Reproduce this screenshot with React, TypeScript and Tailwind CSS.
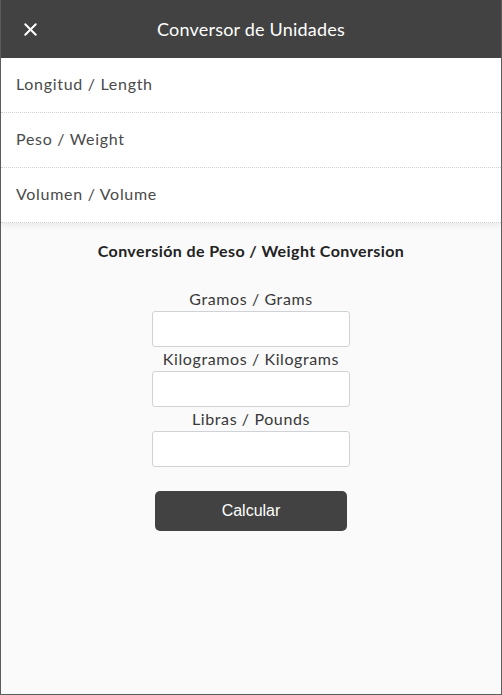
import { X } from 'lucide-react';

const CATEGORIES = ['Longitud / Length', 'Peso / Weight', 'Volumen / Volume'];

const FIELDS = ['Gramos / Grams', 'Kilogramos / Kilograms', 'Libras / Pounds'];

export default function App() {
  return (
    <div
      className="w-[502px] h-[695px] flex flex-col bg-[#fafafa] border-x border-b border-[#5c5c5c] overflow-hidden"
      style={{ fontFamily: 'Lato, "Open Sans", sans-serif' }}
    >
      <header className="h-[58px] shrink-0 bg-[#424242] flex items-center relative">
        <button className="absolute left-[19px] top-[19px] text-white">
          <X className="w-[21px] h-[21px]" strokeWidth={2.25} />
        </button>
        <h1 className="w-full text-center text-white text-[18px] tracking-[0.2px]">
          Conversor de Unidades
        </h1>
      </header>

      <nav className="bg-white shadow-[0_2px_6px_rgba(0,0,0,0.08)]">
        {CATEGORIES.map((c) => (
          <div
            key={c}
            className="h-[55px] flex items-center px-[15px] pb-[2px] text-[16px] text-[#4a4a4a] tracking-[0.7px] border-b border-dotted border-[#d0d0d0]"
          >
            {c}
          </div>
        ))}
      </nav>

      <main className="flex flex-col items-center pt-[16px]">
        <h2 className="text-[16px] font-bold text-[#222] tracking-[0.4px]">
          Conversión de Peso / Weight Conversion
        </h2>

        <div className="flex flex-col items-center mt-[24px]">
          {FIELDS.map((f) => (
            <label key={f} className="flex flex-col items-center">
              <span className="text-[16px] text-[#383838] leading-[24px] tracking-[0.6px]">{f}</span>
              <input
                type="text"
                className="w-[198px] h-[36px] bg-white border border-[#cfd3d8] rounded-[3px] outline-none"
              />
            </label>
          ))}
        </div>

        <button
          className="mt-[24px] w-[192px] h-[40px] bg-[#424242] text-white rounded-[5px] text-[16px]"
          style={{ fontFamily: '"Liberation Sans", Arial, sans-serif' }}
        >
          Calcular
        </button>
      </main>
    </div>
  );
}
